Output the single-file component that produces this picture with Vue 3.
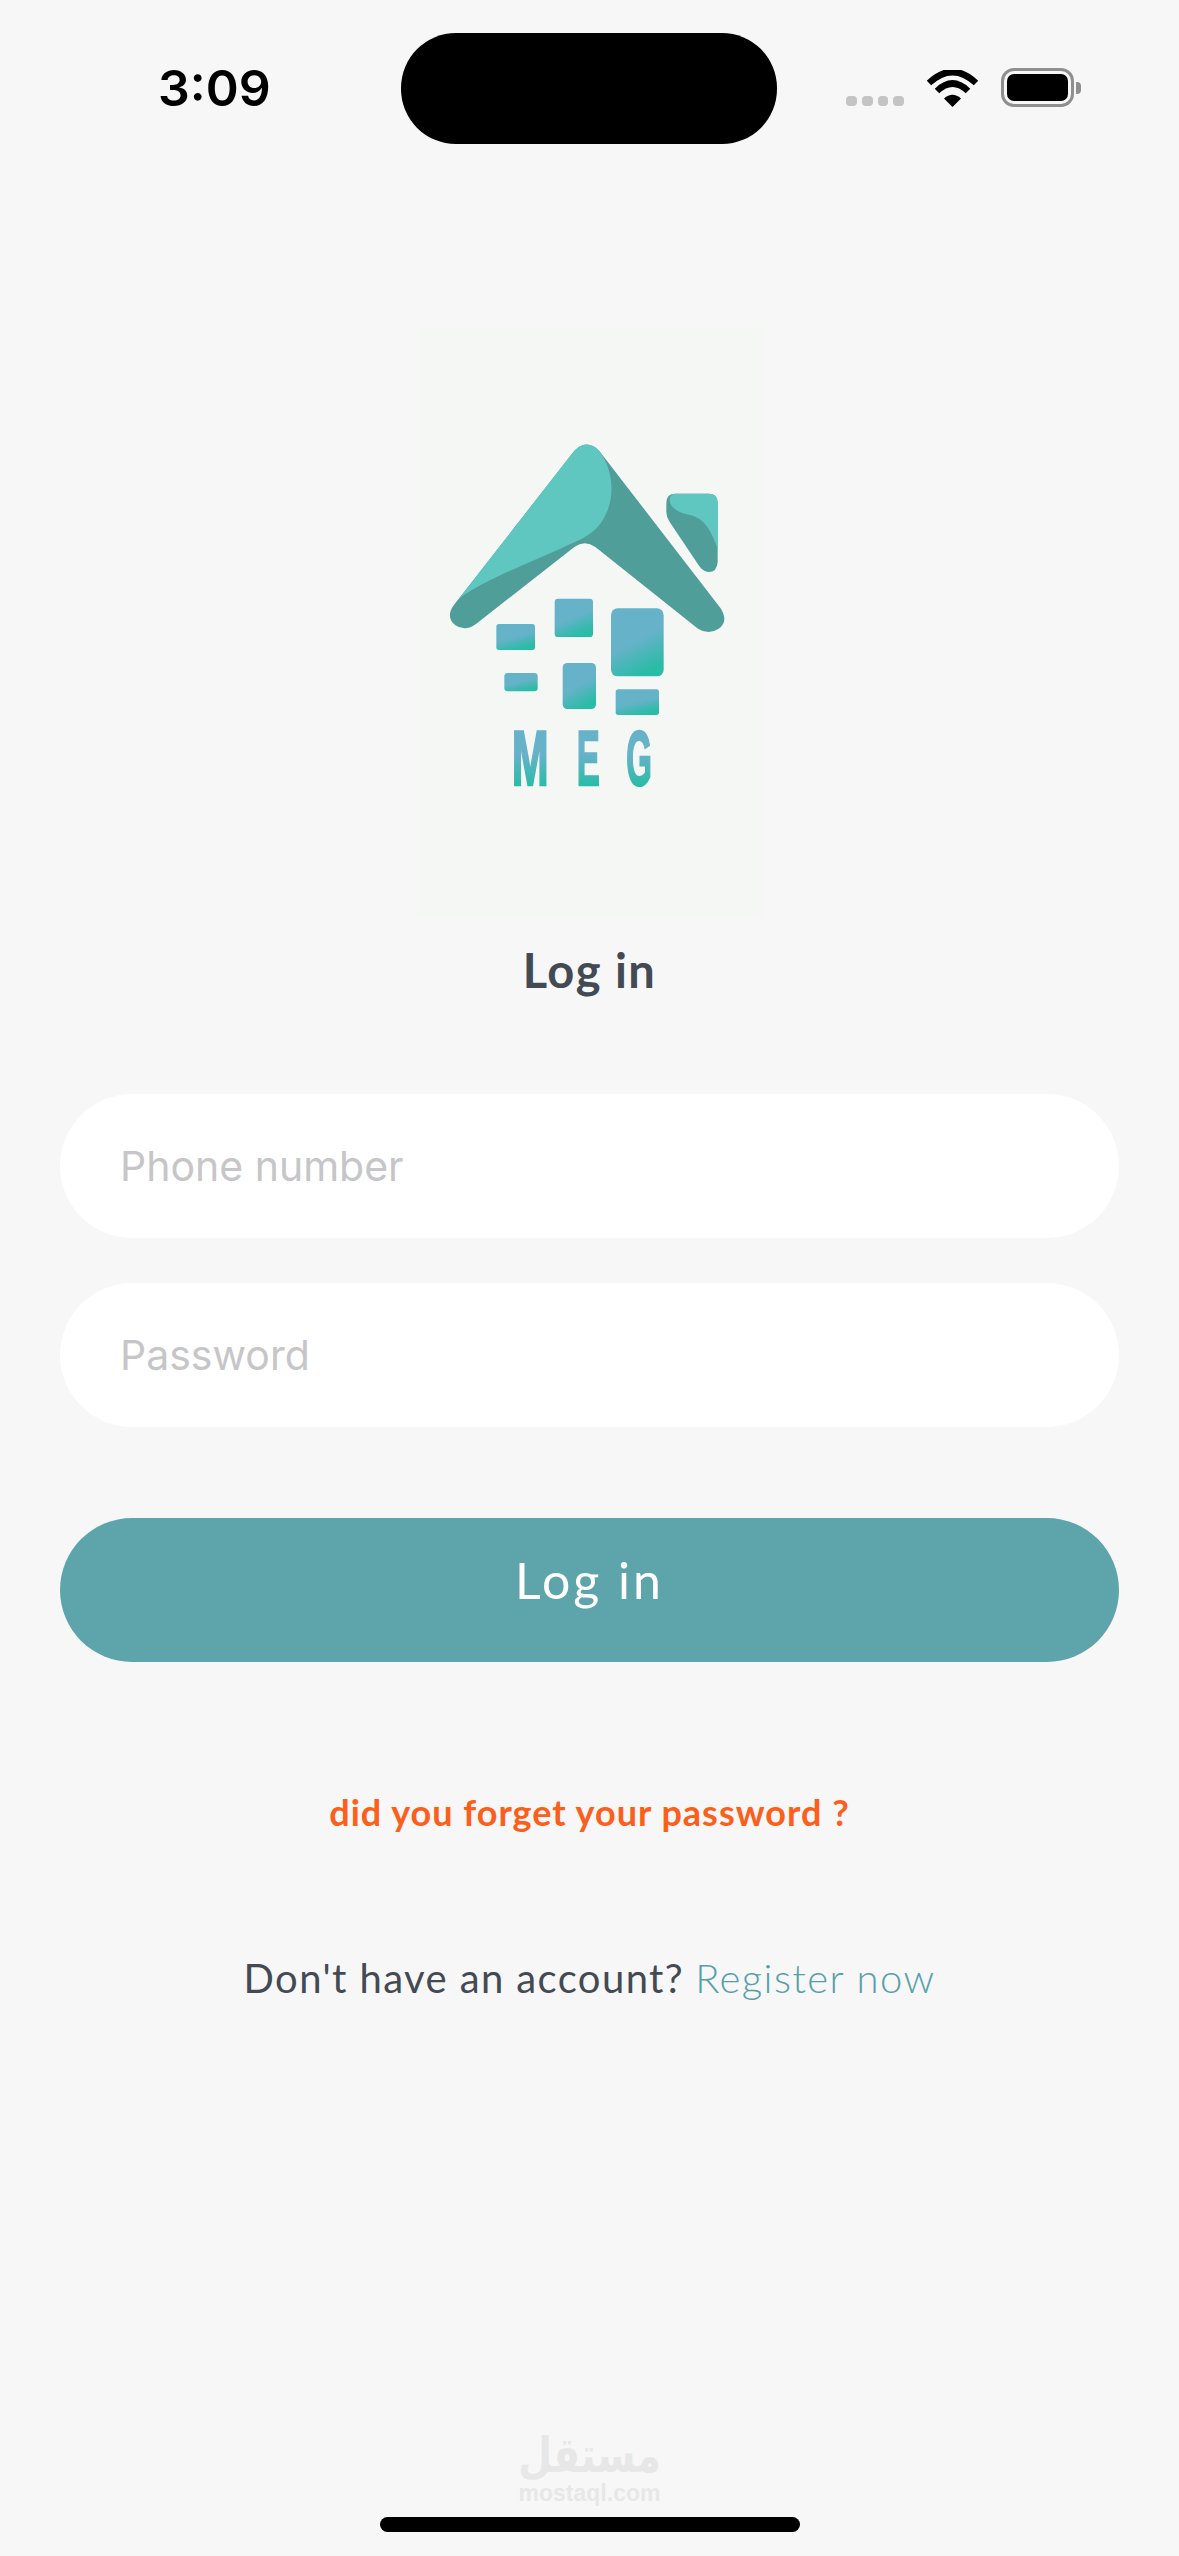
<script setup>
const windows = [
  { x: 288, y: 911, w: 116, h: 78, r: 8 },
  { x: 463, y: 835, w: 115, h: 115, r: 10 },
  { x: 632, y: 864, w: 158, h: 204, r: 20 },
  { x: 312, y: 1058, w: 100, h: 55, r: 10 },
  { x: 487, y: 1028, w: 100, h: 138, r: 14 },
  { x: 646, y: 1107, w: 130, h: 77, r: 8 },
]
const letters = [
  { c: 'M', x: 334, w: 111 },
  { c: 'E', x: 529, w: 69 },
  { c: 'G', x: 678, w: 77 },
]
</script>

<template>
  <div class="page">
    <header class="status">
      <span class="time">3:09</span>
      <div class="island"></div>
      <div class="status-right">
        <div class="dots"><i></i><i></i><i></i><i></i></div>
        <svg class="wifi" width="53" height="37" viewBox="0 0 53 37">
          <path d="M3 13Q26.500 -9 50 13" fill="none" stroke="#000" stroke-width="6.500" />
          <path d="M11 21Q26.500 6 42 21" fill="none" stroke="#000" stroke-width="6.500" />
          <path d="M18 28.500Q26.500 21 35 28.500L26.500 37Z" fill="#000" />
        </svg>
        <div class="battery"><div class="battery-fill"></div></div>
        <div class="battery-cap"></div>
      </div>
    </header>

    <div class="logo">
      <svg width="345" height="591" viewBox="50 20 1035 1773">
        <defs>
          <linearGradient id="win" x1="0.25" y1="0" x2="0.65" y2="1">
            <stop offset="0.5" stop-color="#66b2c9" />
            <stop offset="0.95" stop-color="#29bca6" />
          </linearGradient>
          <linearGradient id="word" gradientUnits="userSpaceOnUse" x1="0" y1="1225" x2="0" y2="1398">
            <stop offset="0.45" stop-color="#66b2c9" />
            <stop offset="1" stop-color="#29bca6" />
          </linearGradient>
        </defs>
        <path d="M515 400Q555 350 597 392L962 865Q985 905 955 925Q925 945 893 925L585 680Q553 658 522 680L228 910Q195 935 165 915Q135 890 160 855Z" fill="#509e9a" />
        <path d="M515 400Q555 350 597 392C640 450 650 540 600 610C570 650 530 660 480 685C370 735 250 780 176 835Z" fill="#5fc7c0" />
        <path d="M825 520L925 520Q952 520 952 548L952 725Q950 755 925 755Q908 755 895 735L808 605Q798 590 798 575L798 548Q798 520 825 520Z" fill="#509e9a" />
        <path d="M825 520L925 520Q952 520 952 548L952 685C930 620 905 590 865 583C825 575 805 555 808 535Q812 520 825 520Z" fill="#5fc7c0" />
        <rect v-for="(r, i) in windows" :key="i" :x="r.x" :y="r.y" :width="r.w" :height="r.h" :rx="r.r" fill="url(#win)" />
        <text
          v-for="l in letters"
          :key="l.c"
          class="word"
          :x="l.x"
          y="1395"
          :textLength="l.w"
          lengthAdjust="spacingAndGlyphs"
          fill="url(#word)"
          stroke="url(#word)"
          stroke-width="7"
        >{{ l.c }}</text>
      </svg>
    </div>

    <h1 class="title">Log in</h1>

    <form class="form" @submit.prevent>
      <input class="field" type="tel" placeholder="Phone number" />
      <input class="field" type="password" placeholder="Password" />
      <button class="submit" type="submit">Log in</button>
    </form>

    <a class="forgot">did you forget your password ?</a>

    <p class="register"><span>Don't have an account?</span><a>Register now</a></p>

    <footer class="foot">
      <div class="mark-ar" lang="ar" dir="rtl">مستقل</div>
      <div class="mark-en">mostaql.com</div>
      <div class="home"></div>
    </footer>
  </div>
</template>

<style>
html, body { margin: 0; background: #f7f7f7; }
</style>

<style scoped>
.page {
  width: 1179px;
  height: 2556px;
  background: #f7f7f7;
  display: flex;
  flex-direction: column;
  align-items: center;
  font-family: Lato, "Noto Sans", sans-serif;
  color: #434a54;
  overflow: hidden;
}
.status {
  width: 100%;
  box-sizing: border-box;
  height: 144px;
  padding: 33px 0 0 158px;
  display: flex;
  align-items: flex-start;
}
.time {
  width: 243px;
  height: 111px;
  line-height: 111px;
  font-family: Inter, sans-serif;
  font-weight: 600;
  font-size: 50px;
  color: #000;
}
.island {
  width: 376px;
  height: 111px;
  border-radius: 55px;
  background: #000;
}
.status-right {
  margin-left: 69px;
  height: 74px;
  display: flex;
  align-items: flex-end;
}
.dots {
  display: flex;
  gap: 5px;
  width: 58px;
  margin-bottom: 1px;
}
.dots i {
  width: 10.750px;
  height: 10px;
  border-radius: 4px;
  background: #c4c4c4;
}
.wifi {
  margin-left: 22px;
}
.battery {
  margin-left: 22px;
  width: 73px;
  height: 39px;
  box-sizing: border-box;
  border: 3px solid #8f8f8f;
  border-radius: 13px;
  padding: 3px;
}
.battery-fill {
  width: 100%;
  height: 100%;
  border-radius: 7px;
  background: #000;
}
.battery-cap {
  width: 5px;
  height: 12px;
  margin: 0 0 13px 2px;
  border-radius: 0 4px 4px 0;
  background: #8f8f8f;
}
.logo {
  margin-top: 183px;
  width: 345px;
  height: 591px;
  background: #f5f7f5;
}
.logo svg { display: block; }
.word {
  font-family: "Liberation Sans", sans-serif;
  font-weight: 700;
  font-size: 232px;
}
.title {
  margin: 22px 0 94px;
  height: 60px;
  line-height: 60px;
  font-size: 47px;
  font-weight: 700;
  letter-spacing: 1.500px;
}
.form {
  width: 1059px;
  display: flex;
  flex-direction: column;
}
.field {
  display: block;
  height: 144px;
  box-sizing: border-box;
  border: 0;
  outline: 0;
  border-radius: 72px;
  background: #fff;
  padding: 0 60px;
  font-family: Inter, sans-serif;
  font-size: 41px;
  margin-bottom: 45px;
}
.field::placeholder { color: #c6c6c8; opacity: 1; }
.submit {
  margin-top: 46px;
  height: 144px;
  border: 0;
  border-radius: 72px;
  background: #5ea5ab;
  color: #fff;
  font-family: Lato, "Noto Sans", sans-serif;
  font-size: 50px;
  padding: 0 0 20px;
  letter-spacing: 3px;
}
.forgot {
  margin-top: 128px;
  font-size: 36px;
  line-height: 44px;
  font-weight: 700;
  letter-spacing: 1px;
  color: #fc5f1c;
}
.register {
  margin: 119px 0 0;
  display: flex;
  gap: 11px;
  font-size: 40px;
  line-height: 50px;
  letter-spacing: 1.400px;
}
.register a {
  color: #55a0a8;
  font-weight: 300;
}
.foot {
  margin-top: auto;
  padding-bottom: 24px;
  display: flex;
  flex-direction: column;
  align-items: center;
}
.mark-ar {
  font-family: "DejaVu Sans", sans-serif;
  font-weight: 700;
  font-size: 39px;
  line-height: 40px;
  color: #e7e7e7;
  transform: scaleY(1.25);
}
.mark-en {
  margin-top: 6px;
  font-family: "Liberation Sans", sans-serif;
  font-weight: 700;
  font-size: 23px;
  line-height: 22px;
  color: #e7e7e7;
}
.home {
  margin-top: 13px;
  width: 420px;
  height: 15px;
  border-radius: 8px;
  background: #000;
}
</style>
